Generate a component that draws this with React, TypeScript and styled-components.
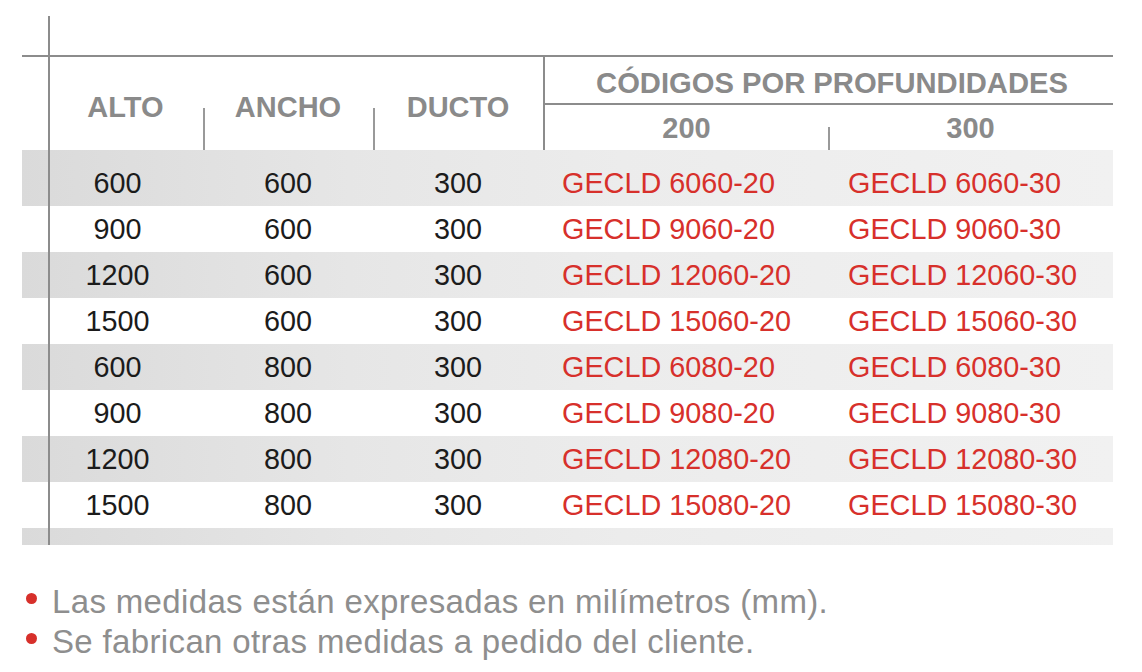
import React from 'react';
import styled, { createGlobalStyle, css } from 'styled-components';

const GlobalStyle = createGlobalStyle`
  html, body {
    margin: 0;
    padding: 0;
    background: #ffffff;
  }
  body {
    font-family: "Liberation Sans", Arial, sans-serif;
  }
`;

type RowData = {
  alto: string,
  ancho: string,
  ducto: string,
  code200: string,
  code300: string,
};

const rows: RowData[] = [
  { alto: '600', ancho: '600', ducto: '300', code200: 'GECLD 6060-20', code300: 'GECLD 6060-30' },
  { alto: '900', ancho: '600', ducto: '300', code200: 'GECLD 9060-20', code300: 'GECLD 9060-30' },
  { alto: '1200', ancho: '600', ducto: '300', code200: 'GECLD 12060-20', code300: 'GECLD 12060-30' },
  { alto: '1500', ancho: '600', ducto: '300', code200: 'GECLD 15060-20', code300: 'GECLD 15060-30' },
  { alto: '600', ancho: '800', ducto: '300', code200: 'GECLD 6080-20', code300: 'GECLD 6080-30' },
  { alto: '900', ancho: '800', ducto: '300', code200: 'GECLD 9080-20', code300: 'GECLD 9080-30' },
  { alto: '1200', ancho: '800', ducto: '300', code200: 'GECLD 12080-20', code300: 'GECLD 12080-30' },
  { alto: '1500', ancho: '800', ducto: '300', code200: 'GECLD 15080-20', code300: 'GECLD 15080-30' },
];

const notes: string[] = [
  'Las medidas están expresadas en milímetros (mm).',
  'Se fabrican otras medidas a pedido del cliente.',
];

const LINE = '#8c8c8c';
const HEAD = '#8a8a8a';
const RED = '#d7302b';

const shaded = css`
  background: linear-gradient(to right, #dadada 0%, #e6e6e6 30%, #ececec 55%, #f1f1f1 100%);
`;

const Page = styled.div`
  width: 1142px;
  height: 672px;
  overflow: hidden;
  padding-top: 16px;
  box-sizing: border-box;
`;

const Table = styled.div`
  position: relative;
  margin-left: 22px;
  width: 1091px;
  padding-top: 39px;

  // the long rule on the left that runs over the bands
  &::before {
    content: '';
    position: absolute;
    left: 26px;
    top: 0;
    bottom: 0;
    width: 2px;
    background: ${LINE};
    z-index: 2;
  }
`;

const Head = styled.div`
  display: flex;
  border-top: 2px solid ${LINE};
  height: 93px;
`;

const HeadCell = styled.div<{ $w: number, $divider?: number, $pad?: number }>`
  position: relative;
  width: ${(p) => p.$w}px;
  box-sizing: border-box;
  display: flex;
  align-items: center;
  justify-content: center;
  padding-top: 7px;
  padding-left: ${(p) => p.$pad || 0}px;
  color: ${HEAD};
  font-weight: 700;
  font-size: 29px;

  ${(p) => p.$divider && css`
    &::before {
      content: '';
      position: absolute;
      left: 0;
      bottom: 0;
      width: 2px;
      height: ${p.$divider}px;
      background: #999999;
    }
  `}
`;

const CodesGroup = styled.div`
  flex: 1;
  display: flex;
  flex-direction: column;
  border-left: 2px solid ${LINE};
`;

const CodesTitle = styled.div`
  height: 48px;
  border-bottom: 2px solid ${LINE};
  display: flex;
  align-items: center;
  justify-content: center;
  padding-top: 6px;
  padding-left: 6px;
  box-sizing: border-box;
  color: ${HEAD};
  font-weight: 700;
  font-size: 29.2px;
`;

const CodesSub = styled.div`
  flex: 1;
  display: grid;
  grid-template-columns: 283px 285px;
`;

const SubCell = styled(HeadCell)`
  width: auto;
  align-items: flex-start;
  padding-top: 7px;
`;

const Row = styled.div<{ $shade: boolean, $first?: boolean }>`
  display: grid;
  grid-template-columns: 181px 170px 170px 285px 285px;
  align-items: center;
  height: 46px;
  box-sizing: content-box;
  padding-top: ${(p) => (p.$first ? 10 : 0)}px;
  font-size: 28.8px;
  color: #1b1b1b;
  ${(p) => p.$shade && shaded}
`;

const Num = styled.div<{ $pad?: number }>`
  text-align: center;
  padding-left: ${(p) => p.$pad || 0}px;
  padding-top: 1px;
`;

const Code = styled.div<{ $pad: number }>`
  color: ${RED};
  padding-left: ${(p) => p.$pad}px;
  padding-top: 1px;
  white-space: nowrap;
`;

const BottomBand = styled.div`
  height: 17px;
  ${shaded}
`;

const Notes = styled.ul`
  list-style: none;
  margin: 37px 0 0 26px;
  padding: 0;
`;

const Note = styled.li`
  display: flex;
  align-items: flex-start;
  height: 40px;
  line-height: 40px;
  font-size: 33px;
  letter-spacing: 0.35px;
  color: #8e8e8e;
  white-space: nowrap;
`;

const Bullet = styled.span`
  flex: none;
  width: 11px;
  height: 11px;
  margin-top: 11px;
  margin-right: 15px;
  border-radius: 50%;
  background: ${RED};
`;

export default function App() {
  return (
    <Page>
      <GlobalStyle />
      <Table>
        <Head>
          <HeadCell $w={181} $pad={26}>ALTO</HeadCell>
          <HeadCell $w={170} $divider={42}>ANCHO</HeadCell>
          <HeadCell $w={170} $divider={42}>DUCTO</HeadCell>
          <CodesGroup>
            <CodesTitle>CÓDIGOS POR PROFUNDIDADES</CodesTitle>
            <CodesSub>
              <SubCell $w={283}>200</SubCell>
              <SubCell $w={285} $divider={23}>300</SubCell>
            </CodesSub>
          </CodesGroup>
        </Head>
        {rows.map((r, i) => (
          <Row key={i} $shade={i % 2 === 0} $first={i === 0}>
            <Num $pad={10}>{r.alto}</Num>
            <Num>{r.ancho}</Num>
            <Num>{r.ducto}</Num>
            <Code $pad={19}>{r.code200}</Code>
            <Code $pad={20}>{r.code300}</Code>
          </Row>
        ))}
        <BottomBand />
      </Table>
      <Notes>
        {notes.map((n) => (
          <Note key={n}>
            <Bullet />
            {n}
          </Note>
        ))}
      </Notes>
    </Page>
  );
}
